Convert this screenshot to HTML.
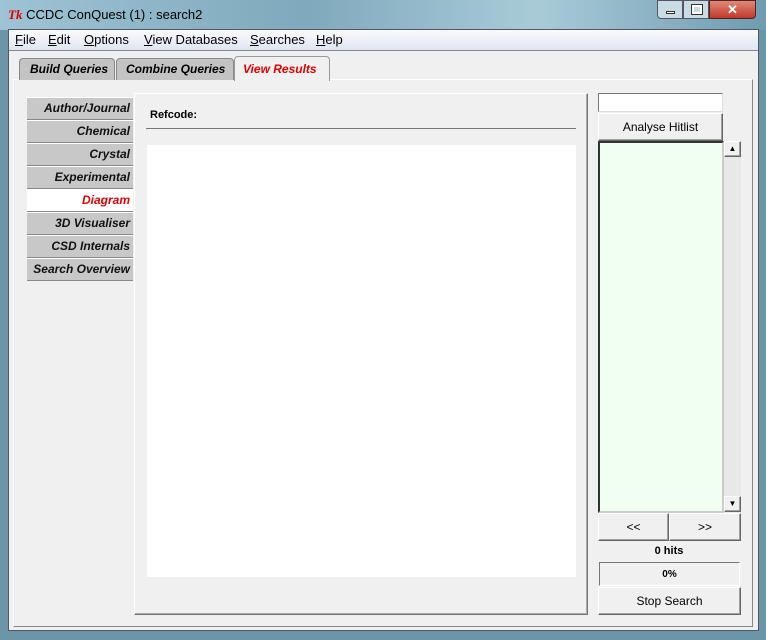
<!DOCTYPE html><html><head><style>
*{box-sizing:border-box;margin:0;padding:0}
body{width:766px;height:640px;overflow:hidden;position:relative;font-family:"Liberation Sans",sans-serif;background:#6d95a8}
.a{position:absolute}
.it{font-style:italic;font-weight:bold;font-size:12px}
.vt{position:absolute;left:27px;width:106px;height:23px;background:#c8c8c8;border-top:1px solid #fff;border-bottom:1px solid #888;text-align:right;padding-right:3px;line-height:21px;font-style:italic;font-weight:bold;font-size:12px;color:#111}
.btn{position:absolute;background:#f0f0f0;border:1px solid;border-color:#fff #666 #666 #fff;box-shadow:inset -1px -1px #a0a0a0;text-align:center;font-size:12px}
</style></head><body>
<div class="a" style="left:0;top:0;width:766px;height:30px;background:linear-gradient(90deg,#9ec3d4,#7fa9bc 40%,#a9cbd8 70%,#6f9cb0)"></div>
<div class="a" style="left:8px;top:7px;font-size:13px;color:#000"><span style="color:#d00;font-style:italic;font-weight:bold;font-family:'Liberation Serif',serif">Tk</span> CCDC ConQuest (1) : search2</div>
<div class="a" style="left:657px;top:0;width:26px;height:19px;background:#c9dbe4;border:1px solid #556;border-radius:0 0 0 4px"><div class="a" style="left:8px;top:10px;width:9px;height:3px;background:#fff;border:1px solid #333"></div></div>
<div class="a" style="left:683px;top:0;width:26px;height:19px;background:#c9dbe4;border:1px solid #556"><div class="a" style="left:8px;top:4px;width:10px;height:9px;border:2px solid #fff;outline:1px solid #333"></div></div>
<div class="a" style="left:709px;top:0;width:47px;height:19px;background:linear-gradient(#e08a78,#c0392b);border:1px solid #522;border-radius:0 0 4px 0;color:#fff;font-weight:bold;text-align:center;font-size:13px;line-height:17px">✕</div>
<div class="a" style="left:8px;top:29px;width:751px;height:602px;background:#f0f0f0;border:1px solid #556"></div>
<div class="a" style="left:9px;top:30px;width:749px;height:21px;background:linear-gradient(#fafbfd,#dfe6f1);border-bottom:1px solid #888;font-size:13px;line-height:20px">
<span class="a" style="left:6px"><u>F</u>ile</span><span class="a" style="left:39px"><u>E</u>dit</span><span class="a" style="left:75px"><u>O</u>ptions</span><span class="a" style="left:135px"><u>V</u>iew Databases</span><span class="a" style="left:241px"><u>S</u>earches</span><span class="a" style="left:307px"><u>H</u>elp</span></div>
<div class="a" style="left:13px;top:79px;width:740px;height:548px;border:1px solid;border-color:#fff #888 #888 #fff"></div>
<div class="a it" style="left:19px;top:58px;width:96px;height:22px;background:#c3c3c3;border:1px solid #888;border-bottom:none;border-radius:4px 4px 0 0;padding-left:10px;line-height:21px">Build Queries</div>
<div class="a it" style="left:116px;top:58px;width:118px;height:22px;background:#c3c3c3;border:1px solid #888;border-bottom:none;border-radius:4px 4px 0 0;padding-left:9px;line-height:21px">Combine Queries</div>
<div class="a it" style="left:234px;top:56px;width:96px;height:25px;background:#f0f0f0;border:1px solid #999;border-bottom:none;border-radius:4px 4px 0 0;padding-left:8px;line-height:24px;color:#e00000">View Results</div>
<div class="vt" style="top:97px">Author/Journal</div>
<div class="vt" style="top:120px">Chemical</div>
<div class="vt" style="top:143px">Crystal</div>
<div class="vt" style="top:166px">Experimental</div>
<div class="vt" style="top:189px;background:#fff;color:#e00000">Diagram</div>
<div class="vt" style="top:212px">3D Visualiser</div>
<div class="vt" style="top:235px">CSD Internals</div>
<div class="vt" style="top:258px">Search Overview</div>
<div class="a" style="left:134px;top:93px;width:454px;height:522px;border:1px solid;border-color:#fff #777 #777 #fff;box-shadow:inset -1px -1px #aaa"></div>
<div class="a" style="left:150px;top:109px;font-weight:bold;font-size:11px">Refcode:</div>
<div class="a" style="left:146px;top:128px;width:430px;height:1px;background:#777"></div>
<div class="a" style="left:147px;top:145px;width:429px;height:432px;background:#fff"></div>
<div class="a" style="left:598px;top:93px;width:125px;height:19px;background:#fff;border:1px solid;border-color:#777 #ddd #ddd #777"></div>
<div class="btn" style="left:598px;top:113px;width:125px;height:28px;line-height:26px">Analyse Hitlist</div>
<div class="a" style="left:598px;top:141px;width:126px;height:372px;background:#f0fff0;border:2px solid;border-color:#333 #ccc #ccc #333"></div>
<div class="a" style="left:724px;top:141px;width:17px;height:372px;background:#e8e8e8"></div>
<div class="btn" style="left:724px;top:141px;width:17px;height:16px;font-size:8px;line-height:14px">▲</div>
<div class="btn" style="left:724px;top:496px;width:17px;height:16px;font-size:8px;line-height:14px">▼</div>
<div class="btn" style="left:598px;top:513px;width:71px;height:28px;line-height:26px">&lt;&lt;</div>
<div class="btn" style="left:669px;top:513px;width:72px;height:28px;line-height:26px">&gt;&gt;</div>
<div class="a" style="left:598px;top:545px;width:142px;text-align:center;font-weight:bold;font-size:11px">0 hits</div>
<div class="a" style="left:599px;top:562px;width:141px;height:24px;border:1px solid;border-color:#777 #fff #fff #777;text-align:center;font-weight:bold;font-size:10px;line-height:24px">0%</div>
<div class="btn" style="left:598px;top:587px;width:143px;height:28px;line-height:26px">Stop Search</div>
</body></html>
